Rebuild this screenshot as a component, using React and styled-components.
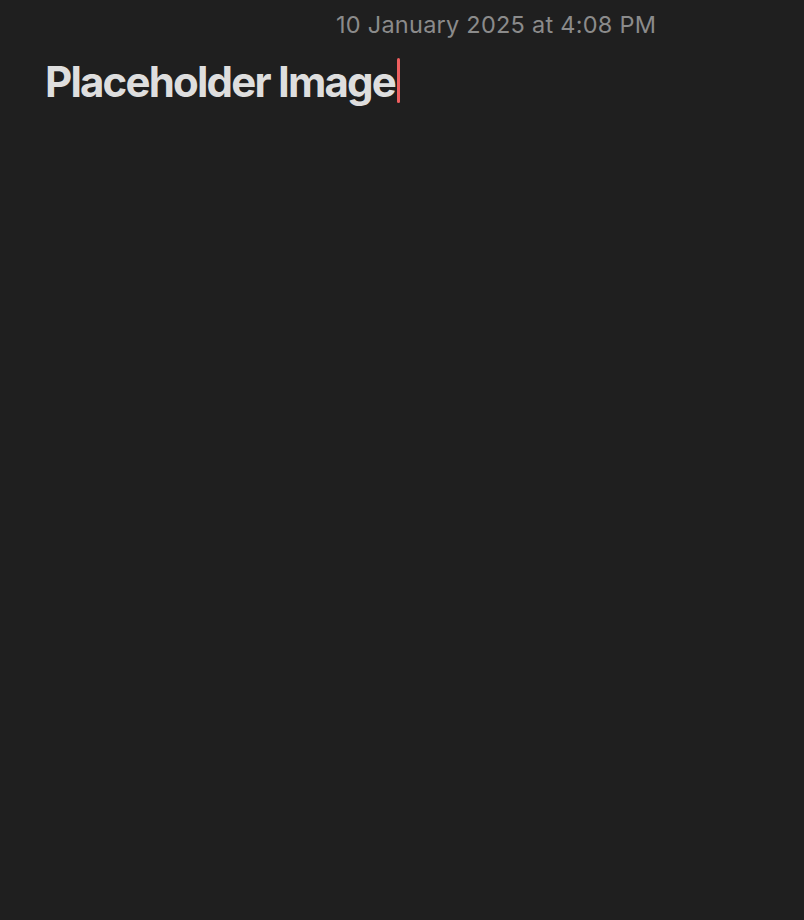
import React from "react";
import styled, { createGlobalStyle } from "styled-components";

const Global = createGlobalStyle`
  html, body { margin: 0; padding: 0; background: #1f1f1f; }
  body { font-family: Inter, "Noto Sans", sans-serif; -webkit-font-smoothing: antialiased; }
`;

const Page = styled.div`
  min-height: 920px;
  background: #1f1f1f;
  display: flex;
  flex-direction: column;
`;

const DateLine = styled.div`
  padding: 10px 0 0 336px;
  font-size: 23.5px;
  line-height: 30px;
  color: #8b8b8b;
  letter-spacing: 0.25px;
`;

const TitleRow = styled.div`
  padding: 19px 0 0 45px;
  display: flex;
  align-items: flex-start;
`;

const Title = styled.h1`
  margin: 0;
  font-size: 42px;
  line-height: 45px;
  font-weight: 700;
  color: #dedede;
  letter-spacing: -1.8px;
`;

const Caret = styled.span`
  display: inline-block;
  width: 3px;
  height: 45px;
  margin-top: -1px;
  margin-left: 2px;
  border-radius: 1.5px;
  background: #ef5f5f;
`;

export default function App() {
  return (
    <>
      <Global />
      <Page>
        <DateLine>10 January 2025 at 4:08 PM</DateLine>
        <TitleRow>
          <Title>Placeholder Image</Title>
          <Caret />
        </TitleRow>
      </Page>
    </>
  );
}
